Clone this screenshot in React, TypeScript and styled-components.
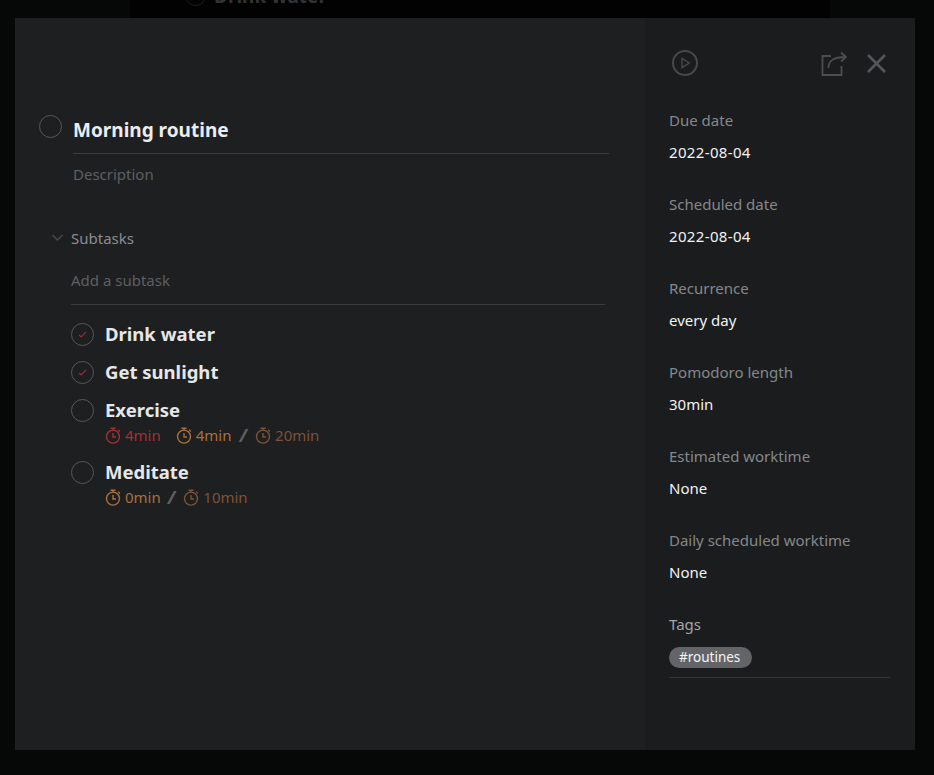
import React from 'react';
import styled, { createGlobalStyle } from 'styled-components';

const Global = createGlobalStyle`
  html, body {
    margin: 0;
    padding: 0;
    height: 100%;
    background: #060808;
    overflow: hidden;
    font-family: "Noto Sans", "Open Sans", sans-serif;
  }
`;

const Page = styled('div')`
  position: relative;
  width: 934px;
  height: 775px;
  overflow: hidden;
  background: #060808;
`;

const BackPanel = styled('div')`
  width: 700px;
  height: 18px;
  margin-left: 130px;
  box-sizing: border-box;
  padding-left: 55px;
  background: #020202;
  display: flex;
  gap: 8px;
  overflow: hidden;
`;

const BackCircle = styled('div')`
  width: 21px;
  height: 21px;
  flex: none;
  box-sizing: border-box;
  margin-top: -15px;
  border: 1px solid #1e1e1e;
  border-radius: 50%;
`;

const BackText = styled('div')`
  color: #333333;
  font-size: 19px;
  font-weight: 700;
  line-height: 26px;
  margin-top: -17px;
`;

const Modal = styled('div')`
  position: absolute;
  left: 15px;
  top: 18px;
  width: 900px;
  height: 732px;
  display: flex;
  background: #1e1f21;
`;

const Main = styled('div')`
  width: 630px;
  box-sizing: border-box;
  padding: 97px 36px 0 24px;
`;

const TitleRow = styled('div')`
  display: flex;
  gap: 11px;
`;

const TitleBlock = styled('div')`
  flex: 1;
`;

const Title = styled('div')`
  height: 39px;
  box-sizing: border-box;
  padding-top: 1px;
  border-bottom: 1px solid #3a3b3d;
  color: #ebeced;
  font-size: 19px;
  line-height: 29px;
  font-weight: 700;
`;

const Description = styled('div')`
  color: #5c5f63;
  font-size: 15px;
  line-height: 20px;
  margin-top: 10px;
`;

const Circle = styled('div')`
  width: 23px;
  height: 23px;
  box-sizing: border-box;
  flex: none;
  border: 1px solid #55575a;
  border-radius: 50%;
  display: flex;
  align-items: center;
  justify-content: center;
`;

const SubtasksHead = styled('div')`
  display: flex;
  align-items: center;
  gap: 7px;
  margin: 44px 0 0 12px;
  color: #8b8d90;
  font-size: 15px;
  line-height: 20px;
`;

const SubtaskArea = styled('div')`
  margin-left: 32px;
  margin-right: 4px;
`;

const AddSubtask = styled('div')`
  height: 46px;
  box-sizing: border-box;
  padding-top: 11px;
  margin-top: 11px;
  margin-bottom: 18px;
  border-bottom: 1px solid #3a3b3d;
  color: #5c5f63;
  font-size: 15px;
  line-height: 20px;
`;

const Task = styled('div')<{ $height: number }>`
  display: flex;
  gap: 11px;
  height: ${({ $height }) => $height}px;
`;

const TaskName = styled('div')`
  color: #e6e7e8;
  font-size: 18.5px;
  line-height: 24px;
  font-weight: 700;
  margin-top: -1px;
`;

const Times = styled('div')`
  display: flex;
  align-items: center;
  margin-top: 3px;
  height: 20px;
`;

const Time = styled('span')<{ $color: string; $gap?: number }>`
  display: inline-flex;
  align-items: center;
  gap: 4px;
  color: ${({ $color }) => $color};
  font-size: 15px;
  line-height: 20px;
  margin-right: ${({ $gap }) => $gap ?? 0}px;
`;

const Slash = styled('span')`
  color: #5f6062;
  font-size: 17px;
  font-weight: 800;
  font-style: italic;
  margin-right: 8px;
`;

const Side = styled('div')`
  width: 270px;
  box-sizing: border-box;
  padding: 32px 25px 0 24px;
  background: #1b1c1e;
`;

const IconBar = styled('div')`
  display: flex;
  align-items: center;
  height: 26px;
  padding: 0 4px 0 3px;
  margin-bottom: 32px;
`;

const Spacer = styled('div')`
  flex: 1;
`;

const IconGap = styled('div')`
  width: 20px;
  flex: none;
`;

const Field = styled('div')`
  height: 84px;
`;

const Label = styled('div')<{ $light?: boolean }>`
  color: ${({ $light }) => ($light ? '#a3a5a8' : '#85888b')};
  font-size: 15px;
  line-height: 20px;
  padding-top: 2px;
`;

const Value = styled('div')<{ $spaced?: boolean }>`
  color: #f2f3f3;
  font-size: 15px;
  line-height: 20px;
  margin-top: 12px;
  letter-spacing: ${({ $spaced }) => ($spaced ? '0.35px' : 'normal')};
`;

const TagLine = styled('div')`
  margin-top: 11px;
  padding-bottom: 9px;
  border-bottom: 1px solid #333436;
`;

const Tag = styled('span')`
  display: inline-block;
  height: 21px;
  padding: 0 12px 0 10px;
  border-radius: 11px;
  background: #636467;
  color: #f5f5f5;
  font-size: 13.5px;
  line-height: 21px;
`;

const Check = () => (
  <svg width="9" height="7" viewBox="0 0 11 9" fill="none" stroke="#a12d33" strokeWidth="1.4">
    <path d="M1 5l2.8 2.6L10 1" />
  </svg>
);

const Stopwatch = ({ color }: { color: string }) => (
  <svg width="16" height="17" viewBox="0 0 16 17" fill="none" stroke={color} strokeWidth="1.4">
    <circle cx="8" cy="9.6" r="6.5" />
    <path d="M5.5 1.2h5M8 1.2v2M13.2 2.8l1.6 1.6M8 6v4h3" />
  </svg>
);

const PlayCircle = () => (
  <svg width="26" height="26" viewBox="0 0 26 26" fill="none" stroke="#47484a">
    <circle cx="13" cy="13" r="12" strokeWidth="2" />
    <path d="M10 8.4v9.2l7.2-4.6z" strokeWidth="1.4" />
  </svg>
);

const ShareIcon = () => (
  <svg width="26" height="25" viewBox="0 0 26 25" fill="none" stroke="#4d4e50" strokeWidth="1.8">
    <path d="M10 5H1.5v19h19v-9" />
    <path d="M7.5 17c0-7 4.5-11 17-11M20 1.5L25 6l-5 4.5" />
  </svg>
);

const CloseIcon = () => (
  <svg width="19" height="19" viewBox="0 0 19 19" fill="none" stroke="#55565a" strokeWidth="2.6">
    <path d="M1 1l17 17M18 1L1 18" />
  </svg>
);

const Chevron = () => (
  <svg width="13" height="8" viewBox="0 0 13 8" fill="none" stroke="#47494c" strokeWidth="1.5">
    <path d="M1.5 1l5 5 5-5" />
  </svg>
);

const RED = '#a62f33';
const ORANGE = '#a8703f';
const BROWN = '#7d5238';

const fields = [
  { label: 'Due date', value: '2022-08-04', spaced: true },
  { label: 'Scheduled date', value: '2022-08-04', spaced: true },
  { label: 'Recurrence', value: 'every day' },
  { label: 'Pomodoro length', value: '30min' },
  { label: 'Estimated worktime', value: 'None' },
  { label: 'Daily scheduled worktime', value: 'None' },
];

export default function App() {
  return (
    <Page>
      <Global />
      <BackPanel>
        <BackCircle />
        <BackText>Drink water</BackText>
      </BackPanel>
      <Modal>
        <Main>
          <TitleRow>
            <Circle />
            <TitleBlock>
              <Title>Morning routine</Title>
              <Description>Description</Description>
            </TitleBlock>
          </TitleRow>
          <SubtasksHead>
            <Chevron />
            Subtasks
          </SubtasksHead>
          <SubtaskArea>
            <AddSubtask>Add a subtask</AddSubtask>
            <Task $height={38}>
              <Circle><Check /></Circle>
              <TaskName>Drink water</TaskName>
            </Task>
            <Task $height={38}>
              <Circle><Check /></Circle>
              <TaskName>Get sunlight</TaskName>
            </Task>
            <Task $height={62}>
              <Circle />
              <div>
                <TaskName>Exercise</TaskName>
                <Times>
                  <Time $color={RED} $gap={15}><Stopwatch color={RED} />4min</Time>
                  <Time $color={ORANGE} $gap={8}><Stopwatch color={ORANGE} />4min</Time>
                  <Slash>/</Slash>
                  <Time $color={BROWN}><Stopwatch color={BROWN} />20min</Time>
                </Times>
              </div>
            </Task>
            <Task $height={62}>
              <Circle />
              <div>
                <TaskName>Meditate</TaskName>
                <Times>
                  <Time $color={ORANGE} $gap={7}><Stopwatch color={ORANGE} />0min</Time>
                  <Slash>/</Slash>
                  <Time $color={BROWN}><Stopwatch color={BROWN} />10min</Time>
                </Times>
              </div>
            </Task>
          </SubtaskArea>
        </Main>
        <Side>
          <IconBar>
            <PlayCircle />
            <Spacer />
            <ShareIcon />
            <IconGap />
            <CloseIcon />
          </IconBar>
          {fields.map((f) => (
            <Field key={f.label}>
              <Label>{f.label}</Label>
              <Value $spaced={f.spaced}>{f.value}</Value>
            </Field>
          ))}
          <Label $light>Tags</Label>
          <TagLine>
            <Tag>#routines</Tag>
          </TagLine>
        </Side>
      </Modal>
    </Page>
  );
}
